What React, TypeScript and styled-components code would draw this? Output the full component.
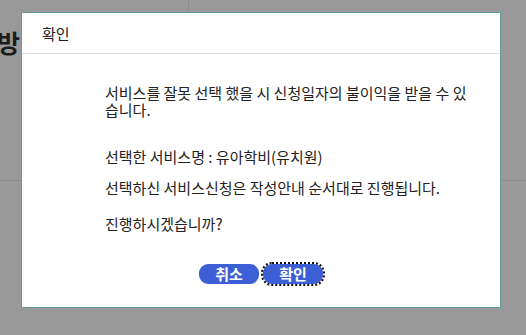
import React from "react";
import styled, { createGlobalStyle } from "styled-components";

const GlobalStyle = createGlobalStyle`
  html, body {
    margin: 0;
    padding: 0;
    background: #999999;
  }
  body {
    font-family: "Noto Sans CJK KR", "Noto Sans", sans-serif;
  }
`;

const Page = styled.div`
  position: relative;
  width: 526px;
  height: 335px;
  overflow: hidden;
  background: #999999;
`;

const PageTop = styled.div`
  display: flex;
  height: 180px;
  border-bottom: 1px solid #8c8c8c;
`;

const PageSide = styled.div`
  width: 189px;
  border-right: 1px solid #8c8c8c;
  padding-top: 27px;
  box-sizing: border-box;
`;

const PageTitle = styled.h1`
  margin: 0 0 0 -3px;
  font-size: 25px;
  font-weight: 700;
  color: #1c1c1c;
  line-height: 30px;
`;

const Modal = styled.div`
  position: absolute;
  left: 21px;
  top: 12px;
  width: 480px;
  height: 296px;
  box-sizing: border-box;
  background: #ffffff;
  border: 1px solid #5f9e9a;
  display: flex;
  flex-direction: column;
`;

const Header = styled.div`
  height: 40px;
  padding-left: 20px;
  display: flex;
  align-items: center;
  border-bottom: 1px solid #dddddd;
  font-size: 15px;
  color: #222222;
`;

const Body = styled.div`
  padding: 30px 22px 0 83px;
  color: #222222;
  font-size: 15px;
  line-height: 17px;
`;

const Para = styled.p<{ $gap: number }>`
  margin: ${(p) => p.$gap}px 0 0;
`;

const Buttons = styled.div`
  display: flex;
  justify-content: center;
  gap: 4px;
  margin-top: auto;
  margin-bottom: 23px;
`;

const Button = styled.button<{ $focused?: boolean }>`
  width: 60px;
  height: 20px;
  padding: 0;
  border: none;
  border-radius: 9px;
  background: #3d5fd6;
  color: #ffffff;
  font-family: "Noto Sans CJK KR", sans-serif;
  font-size: 15px;
  font-weight: 700;
  line-height: 20px;
  outline: ${(p) => (p.$focused ? "2px dotted #111" : "none")};
  outline-offset: 0px;
`;

export default function App() {
  return (
    <>
      <GlobalStyle />
      <Page>
        <PageTop>
          <PageSide>
            <PageTitle>방</PageTitle>
          </PageSide>
        </PageTop>
        <Modal>
          <Header>확인</Header>
          <Body>
            <Para $gap={0}>
              서비스를 잘못 선택 했을 시 신청일자의 불이익을 받을 수 있습니다.
            </Para>
            <Para $gap={30}>선택한 서비스명 : 유아학비(유치원)</Para>
            <Para $gap={14}>선택하신 서비스신청은 작성안내 순서대로 진행됩니다.</Para>
            <Para $gap={19}>진행하시겠습니까?</Para>
          </Body>
          <Buttons>
            <Button>취소</Button>
            <Button $focused>확인</Button>
          </Buttons>
        </Modal>
      </Page>
    </>
  );
}
